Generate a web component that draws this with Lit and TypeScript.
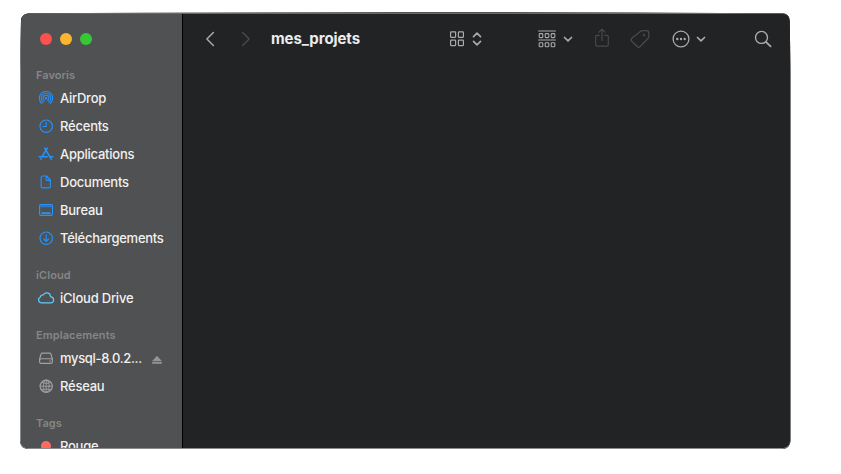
import { LitElement, html, css, svg, nothing } from "lit";
import { customElement, property } from "lit/decorators.js";

const ring = (r: number, a: number) => {
  // Arc open at the bottom, centred on the AirDrop source point
  const t = (a * Math.PI) / 180;
  const dx = r * Math.sin(t);
  const dy = r * Math.cos(t);
  return `M${8 - dx} ${8.2 + dy}A${r} ${r} 0 1 1 ${8 + dx} ${8.2 + dy}`;
};

const icons: Record<string, { w: number; h: number; body: unknown }> = {
  airdrop: { w: 16, h: 16, body: svg`<g stroke-width="1.05"><path d=${ring(6.7, 38)} /><path d=${ring(4.8, 34)} /><path d=${ring(2.9, 32)} /></g><circle cx="8" cy="8.2" r="1.2" fill="currentColor" stroke="none"/>` },
  clock: { w: 16, h: 16, body: svg`<circle cx="8.2" cy="8.2" r="6.2"/><path d="M8.2 4.2v4.3H4.9"/>` },
  apps: { w: 16, h: 16, body: svg`<g stroke-width="1.6"><path d="M6.7 2.2l5.8 9.6"/><path d="M9.3 2.2L4.2 10.4"/><path d="M1.3 10.7h8"/><path d="M11.8 10.7h2.9"/><path d="M3.1 12.6l-.4.6M13 12.6l.4.6"/></g>` },
  doc: { w: 16, h: 16, body: svg`<path d="M4.5 2h4L12.3 6v6.4a1.4 1.4 0 0 1-1.4 1.4H4.5a1.4 1.4 0 0 1-1.4-1.4V3.4A1.4 1.4 0 0 1 4.5 2z"/><path d="M8.2 2.3v3a1 1 0 0 0 1 1h3"/>` },
  desktop: { w: 16, h: 16, body: svg`<rect x="1.6" y="2.6" width="12.9" height="10.8" rx="1.3"/><path d="M2 4.3h12" stroke-width="1.8" opacity=".6"/><path d="M4 11.1h8" stroke-width="1.7"/>` },
  download: { w: 16, h: 16, body: svg`<circle cx="8.2" cy="8.2" r="6.2"/><path d="M8.2 4.7v6.5M5.8 9l2.4 2.4L10.6 9"/>` },
  cloud: { w: 18, h: 16, body: svg`<path d="M4.5 12.8a3 3 0 0 1-1-5.8C3.4 5.5 4.8 4.7 6 5.1 8 1.5 13.3 2.4 13.5 6.6 17.9 7.4 17.3 12.8 13.8 12.8z"/>` },
  drive: { w: 16, h: 16, body: svg`<path d="M4.3 3.1h7.4a1.3 1.3 0 0 1 1.2.9l1.5 5v2.7a1.6 1.6 0 0 1-1.6 1.6H3.2a1.6 1.6 0 0 1-1.6-1.6V9l1.5-5a1.3 1.3 0 0 1 1.2-.9z"/><path d="M1.8 9.7q.3-1 1.300-1h9.800q1 0 1.300 1"/><path d="M11.600 11h.9"/>` },
  globe: { w: 16, h: 16, body: svg`<circle cx="8.2" cy="8.2" r="6.1"/><g stroke-width=".9"><ellipse cx="8.2" cy="8.2" rx="3" ry="6.1"/><path d="M8.2 2v12.4M2 8.2h12.4M3.5 4.6q4.7 2 9.4 0M3.5 11.8q4.7-2 9.4 0"/></g>` },
  eject: { w: 12, h: 12, body: svg`<path d="M6 1.7L10.8 6.9H1.2z M1.2 7.8h9.6v1.9H1.2z" fill="currentColor" stroke="none"/>` },
  back: { w: 10, h: 16, body: svg`<path d="M8.4 1.5L1.9 8l6.5 6.5" stroke-width="1.5"/>` },
  forward: { w: 10, h: 16, body: svg`<path d="M1.6 1.5L8.1 8l-6.5 6.5" stroke-width="1.5"/>` },
  grid: { w: 16, h: 16, body: svg`<g stroke-width="1.2"><rect x="1.6" y=".9" width="5" height="5.4" rx=".5"/><rect x="9.400" y=".9" width="5" height="5.4" rx=".5"/><rect x="1.6" y="9.2" width="5" height="5.4" rx=".5"/><rect x="9.400" y="9.2" width="5" height="5.4" rx=".5"/></g>` },
  updown: { w: 10, h: 16, body: svg`<path d="M1.5 5.6L5 2.2l3.5 3.4M1.5 10.4L5 13.8l3.5-3.4" stroke-width="1.7"/>` },
  group: { w: 18, h: 18, body: svg`<path d="M.6 1h16.8M.6 10h16.8" stroke-width="1.1"/><g stroke-width="1.1"><rect x="1.2" y="3.6" width="3.6" height="4" rx=".8"/><rect x="7.2" y="3.6" width="3.6" height="4" rx=".8"/><rect x="13.2" y="3.6" width="3.6" height="4" rx=".8"/><rect x="1.2" y="12.7" width="3.6" height="4" rx=".8"/><rect x="7.2" y="12.7" width="3.6" height="4" rx=".8"/><rect x="13.2" y="12.7" width="3.6" height="4" rx=".8"/></g>` },
  down: { w: 10, h: 8, body: svg`<path d="M1.5 2.5L5 5.8l3.5-3.3" stroke-width="1.7"/>` },
  share: { w: 16, h: 20, body: svg`<path d="M5.3 7.3H3a1.3 1.3 0 0 0-1.3 1.3v8.2A1.3 1.3 0 0 0 3 18.1h10a1.3 1.3 0 0 0 1.3-1.3V8.6A1.3 1.3 0 0 0 13 7.3h-2.3M8 12.4V1.4M5 4.2l3-3 3 3" stroke-width="1.2"/>` },
  tag: { w: 20, h: 20, body: svg`<path d="M12 1.700h4.600q2.200 0 2.200 2.200v3.900q0 .8-.6 1.400l-8.300 8.600q-1.200 1.200-2.400 0L1.500 12q-1.100-1.200 0-2.400l9.100-7.300q.6-.6 1.400-.6z" stroke-width="1.3"/><circle cx="14" cy="6" r="1.200" fill="currentColor" stroke="none"/>` },
  more: { w: 18, h: 18, body: svg`<circle cx="9" cy="9" r="7.9" stroke-width="1.3"/><g fill="currentColor" stroke="none"><circle cx="5.3" cy="9" r="1.2"/><circle cx="9" cy="9" r="1.2"/><circle cx="12.7" cy="9" r="1.2"/></g>` },
  search: { w: 18, h: 18, body: svg`<circle cx="7.5" cy="7.4" r="6" stroke-width="1.4"/><path d="M11.9 11.8l4.7 4.5" stroke-width="1.8"/>` },
};

@customElement("finder-icon")
class FinderIcon extends LitElement {
  @property() name = "";
  static styles = css`
    :host { display: block; flex: none; }
    svg { display: block; fill: none; stroke: currentColor; stroke-width: 1.15; stroke-linecap: round; stroke-linejoin: round; }
  `;
  render() {
    const i = icons[this.name];
    return i ? html`<svg width=${i.w} height=${i.h} viewBox="0 0 ${i.w} ${i.h}">${i.body}</svg>` : nothing;
  }
}

interface Place { label: string; icon: string; tone: string; eject?: boolean; spacing: number }

const sections: { title: string; spacing: number; items: Place[] }[] = [
  { title: "Favoris", spacing: 0.05, items: [
    { label: "AirDrop", icon: "airdrop", tone: "blue", spacing: -0.26 },
    { label: "Récents", icon: "clock", tone: "blue", spacing: -0.22 },
    { label: "Applications", icon: "apps", tone: "blue", spacing: -0.25 },
    { label: "Documents", icon: "doc", tone: "blue", spacing: -0.23 },
    { label: "Bureau", icon: "desktop", tone: "blue", spacing: -0.25 },
    { label: "Téléchargements", icon: "download", tone: "blue", spacing: -0.26 },
  ] },
  { title: "iCloud", spacing: 0.1, items: [{ label: "iCloud Drive", icon: "cloud", tone: "cyan", spacing: -0.22 }] },
  { title: "Emplacements", spacing: 0.1, items: [
    { label: "mysql-8.0.2...", icon: "drive", tone: "grey", eject: true, spacing: -0.33 },
    { label: "Réseau", icon: "globe", tone: "grey", spacing: -0.25 },
  ] },
  { title: "Tags", spacing: 0, items: [{ label: "Rouge", icon: "", tone: "red", spacing: -0.25 }] },
];

@customElement("app-root")
class AppRoot extends LitElement {
  static styles = css`
    :host { display: block; box-sizing: border-box; width: 841px; height: 474px; padding: 12px 0 0 20px; background: #fff; overflow: hidden; font-family: Inter, "Liberation Sans", sans-serif; }
    .frame { box-sizing: border-box; width: 771px; height: 437px; padding-top: 1px; background: #1a1b1b; clip-path: path("M9 1.300Q385 -.8 762 1.300Q769.500 1.500 769.700 8.500L770.500 60V429Q770 436.800 762 437H8Q.3 436.500 0 429V60L1 9Q1.300 1.700 9 1.300Z"); }
    .window { box-sizing: border-box; width: 771px; height: 436px; display: flex; border: 1px solid #8a8b8c; border-top-color: #66696a; border-radius: 8px; overflow: hidden; background: #222325; }
    .sidebar { box-sizing: border-box; width: 162px; height: 100%; flex: none; background: #505152; border-right: 1px solid #000; overflow: hidden; }
    .lights { display: flex; gap: 8px; padding: 19px 0 0 19px; height: 33px; }
    .light { width: 12px; height: 12px; border-radius: 50%; }
    .close { background: #fc514f; }
    .minimise { background: #fcb52e; }
    .zoom { background: #37c837; }
    .section { margin-bottom: 14px; }
    .title { height: 18px; line-height: 18px; padding-left: 15px; font-size: 11px; font-weight: 600; color: #858687; }
    .row { height: 28px; display: flex; align-items: center; color: #f0f0f0; font-size: 13px; font-weight: 500; white-space: nowrap; }
    .glyph { width: 22px; margin-left: 14px; margin-right: 3px; display: flex; justify-content: center; }
    .blue { color: #2492ff; }
    .cyan { color: #5ccdf8; }
    .grey { color: #a0a1a2; }
    .dot { width: 10px; height: 10px; border-radius: 50%; background: #ff6b62; }
    .eject { margin-left: 9px; color: #939495; padding-top: 3px; }
    .main { flex: 1; min-width: 0; }
    .toolbar { height: 50px; display: flex; align-items: center; color: #a9aaab; padding-left: 22px; }
    .name { margin: 0 0 0 20px; padding-bottom: 1px; width: 178px; font-size: 15px; letter-spacing: -.08px; font-weight: 700; color: #ececec; }
    .dim { color: #48494b; }
    .forward { margin-left: 26px; }
    .updown { margin-left: 7px; }
    .group { margin-left: 56px; }
    .arrow { margin-left: 7px; }
    .share { margin-left: 21px; margin-top: -2px; }
    .tag { margin-left: 20px; }
    .more { margin-left: 22px; }
    .more-arrow { margin-left: 6px; }
    .search { margin-left: 48px; }
  `;
  render() {
    return html`
      <div class="frame"><div class="window">
        <nav class="sidebar">
          <div class="lights"><span class="light close"></span><span class="light minimise"></span><span class="light zoom"></span></div>
          ${sections.map((s) => html`
            <section class="section">
              <div class="title" style="letter-spacing:${s.spacing}px">${s.title}</div>
              ${s.items.map((p) => html`
                <div class="row">
                  <span class="glyph ${p.tone}">${p.icon ? html`<finder-icon name=${p.icon}></finder-icon>` : html`<span class="dot"></span>`}</span>
                  <span style="letter-spacing:${p.spacing}px">${p.label}</span>
                  ${p.eject ? html`<finder-icon class="eject" name="eject"></finder-icon>` : nothing}
                </div>`)}
            </section>`)}
        </nav>
        <main class="main">
          <header class="toolbar">
            <finder-icon name="back"></finder-icon>
            <finder-icon class="forward dim" name="forward"></finder-icon>
            <h1 class="name">mes_projets</h1>
            <finder-icon name="grid"></finder-icon>
            <finder-icon class="updown" name="updown"></finder-icon>
            <finder-icon class="group" name="group"></finder-icon>
            <finder-icon class="arrow" name="down"></finder-icon>
            <finder-icon class="share dim" name="share"></finder-icon>
            <finder-icon class="tag dim" name="tag"></finder-icon>
            <finder-icon class="more" name="more"></finder-icon>
            <finder-icon class="more-arrow" name="down"></finder-icon>
            <finder-icon class="search" name="search"></finder-icon>
          </header>
        </main>
      </div></div>`;
  }
}
